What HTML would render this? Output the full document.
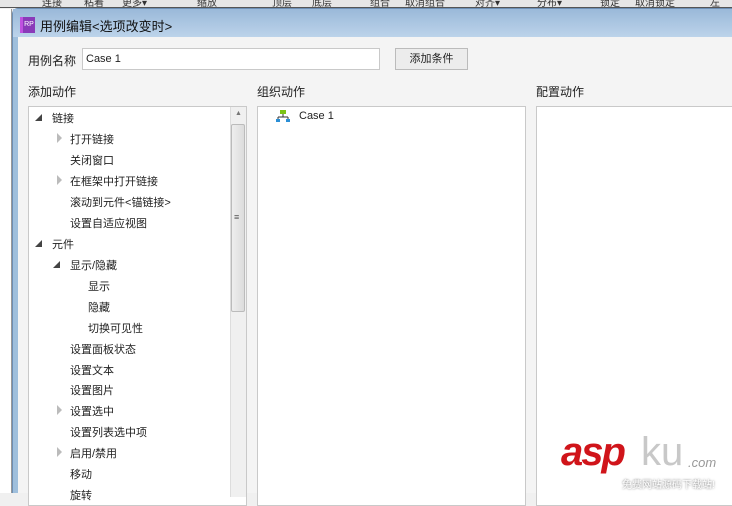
<!DOCTYPE html>
<html><head><meta charset="utf-8"><style>
*{margin:0;padding:0;box-sizing:border-box}
body{width:732px;height:493px;overflow:hidden;position:relative;background:#f0f0f0;font-family:"Liberation Sans","Noto Sans CJK SC",sans-serif;font-size:11px;color:#222}
.a{position:absolute}
.tb{left:0;top:0;width:732px;height:8px;background:#e6e6e6;border-bottom:1px solid #555;overflow:hidden}
.tb span{position:absolute;top:-6px;font-size:10px;color:#333}
.left{left:0;top:9px;width:12px;height:484px;background:#fff;border-right:1px solid #999}
.dlg{left:12px;top:8px;width:720px;height:485px;background:#9fbfdc;border-left:1px solid #6d8fb5;border-top:1px solid #6d8fb5;border-radius:6px 0 0 0}
.title{left:13px;top:9px;width:719px;height:28px;background:linear-gradient(#9ab9d9,#bcd3ea)}
.body{left:18px;top:37px;width:714px;height:456px;background:#f4f4f4}
.box{background:#fff;border:1px solid #c9c9c9}
.row{position:absolute;font-size:11px;white-space:nowrap}
.tri{position:absolute;width:0;height:0}
.open{border-left:7px solid transparent;border-bottom:7px solid #444}
.closed{border-top:5px solid transparent;border-bottom:5px solid transparent;border-left:5px solid #bbb}
</style></head><body>
<div class="a tb"><span style="left:42px">连接</span><span style="left:84px">粘着</span><span style="left:122px">更多▾</span><span style="left:197px">缩放</span><span style="left:272px">顶层</span><span style="left:312px">底层</span><span style="left:370px">组合</span><span style="left:405px">取消组合</span><span style="left:475px">对齐▾</span><span style="left:537px">分布▾</span><span style="left:600px">锁定</span><span style="left:635px">取消锁定</span><span style="left:710px">左</span></div>
<div class="a left"></div>
<div class="a dlg"></div>
<div class="a title"></div>
<div class="a" style="left:20px;top:17px;width:15px;height:16px;background:#8a3ab9;color:#fff;font-size:7px;line-height:16px;text-align:center;border-left:3px solid #c050e0">RP</div>
<div class="a" style="left:40px;top:16px;font-size:13px;color:#111">用例编辑&lt;选项改变时&gt;</div>
<div class="a body"></div>
<div class="a" style="left:28px;top:52px;font-size:12px">用例名称</div>
<div class="a box" style="left:82px;top:48px;width:298px;height:22px;padding:4px 3px;font-size:11px">Case 1</div>
<div class="a" style="left:395px;top:48px;width:73px;height:22px;border:1px solid #bbb;background:#ececec;font-size:11px;text-align:center;line-height:20px">添加条件</div>
<div class="a" style="left:28px;top:83px;font-size:12px">添加动作</div>
<div class="a" style="left:257px;top:83px;font-size:12px">组织动作</div>
<div class="a" style="left:536px;top:83px;font-size:12px">配置动作</div>
<div class="a box" style="left:28px;top:106px;width:219px;height:400px"></div>
<div class="a" style="left:230px;top:107px;width:16px;height:390px;background:#f0f0f0;border-left:1px solid #ddd"></div>
<div class="a" style="left:231px;top:124px;width:14px;height:188px;background:linear-gradient(90deg,#eee,#dcdcdc);border:1px solid #bbb;border-radius:2px"></div>
<div class="a" style="left:234px;top:212px;font-size:9px;color:#555">≡</div>
<div class="a" style="left:235px;top:110px;font-size:7px;color:#777">▲</div>
<div class="a box" style="left:257px;top:106px;width:269px;height:400px"></div>
<div class="a box" style="left:536px;top:106px;width:200px;height:400px"></div>
<svg class="a" style="left:276px;top:110px" width="14" height="12"><rect x="4" y="0" width="6" height="4" fill="#7cc414"/><path d="M7 4v3M2 7h10M2 7v2M12 7v2" stroke="#333" fill="none"/><rect x="0" y="9" width="4" height="3" fill="#2b8fd6"/><rect x="10" y="9" width="4" height="3" fill="#2b8fd6"/></svg>
<div class="row" style="left:299px;top:110px">Case 1</div>

<div class="tri open" style="left:35px;top:114px"></div><div class="row" style="left:52px;top:110px">链接</div>
<div class="tri closed" style="left:57px;top:133px"></div><div class="row" style="left:70px;top:131px">打开链接</div>
<div class="row" style="left:70px;top:152px">关闭窗口</div>
<div class="tri closed" style="left:57px;top:175px"></div><div class="row" style="left:70px;top:173px">在框架中打开链接</div>
<div class="row" style="left:70px;top:194px">滚动到元件&lt;锚链接&gt;</div>
<div class="row" style="left:70px;top:215px">设置自适应视图</div>
<div class="tri open" style="left:35px;top:240px"></div><div class="row" style="left:52px;top:236px">元件</div>
<div class="tri open" style="left:53px;top:261px"></div><div class="row" style="left:70px;top:257px">显示/隐藏</div>
<div class="row" style="left:88px;top:278px">显示</div>
<div class="row" style="left:88px;top:299px">隐藏</div>
<div class="row" style="left:88px;top:320px">切换可见性</div>
<div class="row" style="left:70px;top:341px">设置面板状态</div>
<div class="row" style="left:70px;top:362px">设置文本</div>
<div class="row" style="left:70px;top:382px">设置图片</div>
<div class="tri closed" style="left:57px;top:405px"></div><div class="row" style="left:70px;top:403px">设置选中</div>
<div class="row" style="left:70px;top:424px">设置列表选中项</div>
<div class="tri closed" style="left:57px;top:447px"></div><div class="row" style="left:70px;top:445px">启用/禁用</div>
<div class="row" style="left:70px;top:466px">移动</div>
<div class="row" style="left:70px;top:487px">旋转</div>

<div class="a" style="left:561px;top:432px;font-size:40px;font-weight:bold;font-style:italic;color:#d0141a;letter-spacing:-2px;line-height:40px">asp</div>
<div class="a" style="left:641px;top:432px;font-size:40px;color:#c8c8c8;line-height:40px">ku</div>
<div class="a" style="left:688px;top:455px;font-size:13px;font-style:italic;color:#999">.com</div>
<div class="a" style="left:622px;top:476px;font-size:10px;color:#fff;text-shadow:0 0 2px #666">免费网站源码下载站!</div>
</body></html>
